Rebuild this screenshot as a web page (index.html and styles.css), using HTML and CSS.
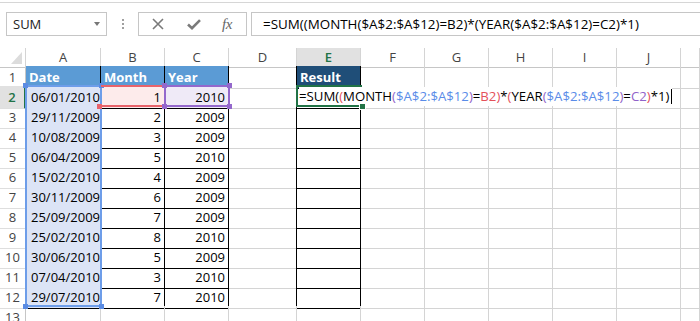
FILE: index.html
```html
<!DOCTYPE html>
<html>
<head>
<meta charset="utf-8">
<link rel="stylesheet" href="styles.css">
</head>
<body>
<div class="app">
  <div class="topline"></div>
  <div class="fbar">
    <div class="namebox"><span>SUM</span><i class="dd"></i></div>
    <div class="grip"><i></i><i></i><i></i></div>
    <div class="tools">
      <svg class="ic-x" width="12" height="12" viewBox="0 0 12 12"><path d="M1 1L11 11M11 1L1 11" stroke="#7a7a7a" stroke-width="1.6" fill="none"/></svg>
      <svg class="ic-ok" width="14" height="11" viewBox="0 0 14 11"><path d="M1 5.5L5 9.2L13 1.2" stroke="#7a7a7a" stroke-width="2.6" fill="none"/></svg>
      <span class="fx">fx</span>
    </div>
    <div class="finput">=SUM((MONTH($A$2:$A$12)=B2)*(YEAR($A$2:$A$12)=C2)*1)</div>
  </div>

  <div class="sheet">
    <div class="row hrow">
      <div class="corner"><i></i></div>
      <div class="ch">A</div><div class="ch">B</div><div class="ch">C</div><div class="ch">D</div><div class="ch sel">E</div><div class="ch">F</div><div class="ch">G</div><div class="ch">H</div><div class="ch">I</div><div class="ch">J</div><div class="ch"></div>
    </div>

    <div class="row">
      <div class="rh">1</div>
      <div class="c t hd">Date</div><div class="c t hd">Month</div><div class="c t hd">Year</div><div class="c dk"></div><div class="c t hr">Result</div><div class="c"></div><div class="c"></div><div class="c"></div><div class="c"></div><div class="c"></div><div class="c"></div>
    </div>
    <div class="row">
      <div class="rh act">2</div>
      <div class="c t dt">06/01/2010</div><div class="c t num rd">1</div><div class="c t num pp">2010</div><div class="c dk"></div>
      <div class="c t edit"><span class="ftxt">=SUM(<b class="r">(</b>MONTH<b class="p">(</b><b class="bl">$A$2:$A$12</b><b class="p">)</b>=<b class="r">B2</b><b class="r">)</b>*<b class="r">(</b>YEAR<b class="p">(</b><b class="bl">$A$2:$A$12</b><b class="p">)</b>=<b class="p">C2</b><b class="r">)</b>*1)<i class="caret"></i></span></div>
      <div class="c nr"></div><div class="c nr"></div><div class="c nr"></div><div class="c nr"></div><div class="c"></div><div class="c"></div>
    </div>
    <div class="row"><div class="rh">3</div><div class="c t dt">29/11/2009</div><div class="c t num">2</div><div class="c t num">2009</div><div class="c dk"></div><div class="c t"></div><div class="c"></div><div class="c"></div><div class="c"></div><div class="c"></div><div class="c"></div><div class="c"></div></div>
    <div class="row"><div class="rh">4</div><div class="c t dt">10/08/2009</div><div class="c t num">3</div><div class="c t num">2009</div><div class="c dk"></div><div class="c t"></div><div class="c"></div><div class="c"></div><div class="c"></div><div class="c"></div><div class="c"></div><div class="c"></div></div>
    <div class="row"><div class="rh">5</div><div class="c t dt">06/04/2009</div><div class="c t num">5</div><div class="c t num">2010</div><div class="c dk"></div><div class="c t"></div><div class="c"></div><div class="c"></div><div class="c"></div><div class="c"></div><div class="c"></div><div class="c"></div></div>
    <div class="row"><div class="rh">6</div><div class="c t dt">15/02/2010</div><div class="c t num">4</div><div class="c t num">2009</div><div class="c dk"></div><div class="c t"></div><div class="c"></div><div class="c"></div><div class="c"></div><div class="c"></div><div class="c"></div><div class="c"></div></div>
    <div class="row"><div class="rh">7</div><div class="c t dt">30/11/2009</div><div class="c t num">6</div><div class="c t num">2009</div><div class="c dk"></div><div class="c t"></div><div class="c"></div><div class="c"></div><div class="c"></div><div class="c"></div><div class="c"></div><div class="c"></div></div>
    <div class="row"><div class="rh">8</div><div class="c t dt">25/09/2009</div><div class="c t num">7</div><div class="c t num">2009</div><div class="c dk"></div><div class="c t"></div><div class="c"></div><div class="c"></div><div class="c"></div><div class="c"></div><div class="c"></div><div class="c"></div></div>
    <div class="row"><div class="rh">9</div><div class="c t dt">25/02/2010</div><div class="c t num">8</div><div class="c t num">2010</div><div class="c dk"></div><div class="c t"></div><div class="c"></div><div class="c"></div><div class="c"></div><div class="c"></div><div class="c"></div><div class="c"></div></div>
    <div class="row"><div class="rh">10</div><div class="c t dt">30/06/2010</div><div class="c t num">5</div><div class="c t num">2009</div><div class="c dk"></div><div class="c t"></div><div class="c"></div><div class="c"></div><div class="c"></div><div class="c"></div><div class="c"></div><div class="c"></div></div>
    <div class="row"><div class="rh">11</div><div class="c t dt">07/04/2010</div><div class="c t num">3</div><div class="c t num">2010</div><div class="c dk"></div><div class="c t"></div><div class="c"></div><div class="c"></div><div class="c"></div><div class="c"></div><div class="c"></div><div class="c"></div></div>
    <div class="row"><div class="rh">12</div><div class="c t dt">29/07/2010</div><div class="c t num">7</div><div class="c t num">2010</div><div class="c dk"></div><div class="c t"></div><div class="c"></div><div class="c"></div><div class="c"></div><div class="c"></div><div class="c"></div><div class="c"></div></div>
    <div class="row"><div class="rh">13</div><div class="c"></div><div class="c"></div><div class="c"></div><div class="c"></div><div class="c"></div><div class="c"></div><div class="c"></div><div class="c"></div><div class="c"></div><div class="c"></div><div class="c"></div></div>

    <div class="hl hl-blue"><i class="h tl"></i><i class="h tr"></i><i class="h bl"></i><i class="h br"></i></div>
    <div class="hl hl-red"><i class="h bl"></i></div>
    <div class="hl hl-purple"><i class="h tl"></i><i class="h tr"></i><i class="h bl"></i><i class="h br"></i></div>
    <div class="hl hl-green"><i class="h br"></i></div>
  </div>
</div>
</body>
</html>
```
FILE: styles.css
```css
html, body { margin: 0; padding: 0; background: #fff; }
.app {
  width: 700px; height: 321px; overflow: hidden; background: #fff;
  font-family: "Open Sans", "Liberation Sans", sans-serif; color: #000;
}
.topline { height: 2px; border-bottom: 1px solid #d6d6d6; }
.fbar { display: flex; align-items: stretch; height: 24px; margin-top: 9px; }
.namebox {
  box-sizing: border-box; width: 101px; margin-left: 6px; border: 1px solid #c6c6c6;
  display: flex; align-items: center; justify-content: space-between; padding: 0 6px 0 6px;
  font-size: 13px; color: #222;
}
.namebox .dd { width: 0; height: 0; border-left: 3.5px solid transparent; border-right: 3.5px solid transparent; border-top: 4px solid #777; }
.grip { width: 31px; display: flex; flex-direction: column; align-items: center; justify-content: center; gap: 2px; }
.grip i { display: block; width: 2px; height: 2px; background: #a0a0a0; }
.tools {
  box-sizing: border-box; width: 109px; border: 1px solid #c6c6c6;
  display: flex; align-items: center; padding-left: 13px;
}
.ic-x { margin-right: 23px; }
.ic-ok { margin-right: 21px; }
.fx { font-family: "Liberation Serif", serif; font-style: italic; font-size: 15px; color: #666; letter-spacing: -0.5px; }
.finput {
  box-sizing: border-box; flex: 1; margin-left: 4px; border: 1px solid #c6c6c6; border-right: 0;
  padding-left: 11px; font-size: 13.4px; line-height: 22px; white-space: nowrap; overflow: hidden;
}
.sheet { position: relative; margin-top: 12px; }
.row {
  display: grid;
  grid-template-columns: 26px 75px 64px 64px 68px 64px 64px 64px 64px 64px 64px 1fr;
  height: 20px;
}
.hrow { height: 18px; }
.corner { position: relative; box-sizing: border-box; border-right: 1px solid #d4d4d4; border-bottom: 1px solid #c6c6c6; }
.corner i { position: absolute; right: 3px; bottom: 3px; width: 0; height: 0; border-left: 11px solid transparent; border-bottom: 12px solid #dcdcdc; }
.ch {
  box-sizing: border-box; border-right: 1px solid #d4d4d4; border-bottom: 1px solid #c6c6c6;
  font-size: 13px; color: #444; text-align: center; line-height: 18px;
}
.ch.sel { background: #e1e1e1; color: #217346; font-weight: 600; border-bottom: 2px solid #217346; }
.rh {
  box-sizing: border-box; border-right: 1px solid #c6c6c6; border-bottom: 1px solid #dedede;
  font-size: 13px; color: #444; text-align: center; line-height: 22px;
}
.rh.act { background: #e1e1e1; color: #217346; font-weight: 600; border-right: 2px solid #217346; }
.c {
  box-sizing: border-box; border-right: 1px solid #d4d4d4; border-bottom: 1px solid #d4d4d4;
  font-size: 13px; line-height: 23px; padding: 0 3px; white-space: nowrap; overflow: hidden;
}
.c.t { border-right-color: #000; border-bottom-color: #000; }
.c.dk { border-right-color: #000; }
.c.nr { border-right-color: transparent; }
.c.hd { background: #5b9bd5; color: #fff; font-weight: 700; }
.c.hr { background: #1f4e78; color: #fff; font-weight: 700; }
.c.dt { background: #dce4f6; padding-left: 5px; }
.c.num { text-align: right; }
.c.rd { background: #fdebeb; }
.c.pp { background: #efeaf7; }
.c.edit { overflow: visible; padding-left: 2px; position: relative; z-index: 2; border-right-color: transparent; line-height: 21px; }
.ftxt { font-size: 13.2px; white-space: nowrap; background: #fff; }
.ftxt b { font-weight: 400; }
.ftxt .r { color: #e4505a; }
.ftxt .p { color: #9062c9; }
.ftxt .bl { color: #5a8ce8; }
.caret { display: inline-block; width: 1px; height: 15px; background: #000; vertical-align: -3px; margin-left: 2px; }
.hl { position: absolute; box-sizing: border-box; }
.hl-blue { left: 25px; top: 37px; width: 77px; height: 222px; border: 2px solid #6d9de9; }
.hl-red { left: 101px; top: 37px; width: 65px; height: 22px; border-top: 2px solid #e8636b; border-bottom: 2px solid #e8636b; }
.hl-purple { left: 164px; top: 37px; width: 66px; height: 22px; border: 2px solid #9468cc; }
.hl-green { left: 296px; top: 37px; width: 66px; height: 22px; border: 2px solid #217346; border-right: 0; z-index: 3; }
.h { position: absolute; width: 5px; height: 5px; }
.hl-blue .h { background: #5b8ce3; }
.hl-red .h { background: #e8636b; }
.hl-purple .h { background: #9468cc; }
.hl-green .h { background: #217346; width: 5px; height: 5px; border: 1px solid #fff; }
.h.tl { left: -4px; top: -4px; }
.h.tr { right: -4px; top: -4px; }
.h.bl { left: -4px; bottom: -4px; }
.h.br { right: -4px; bottom: -4px; }
.hl-green .h.br { right: -4px; bottom: -5px; }
```
